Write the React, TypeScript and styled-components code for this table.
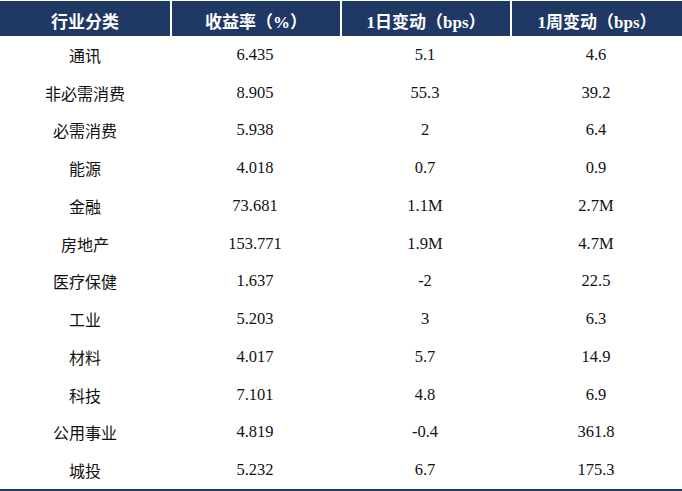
import React from 'react';
import styled, { createGlobalStyle } from 'styled-components';

const GlobalStyle = createGlobalStyle`
  html, body {
    margin: 0;
    padding: 0;
    background: #ffffff;
  }
`

const Table = styled.div`
  width: 682px;
  display: grid;
  grid-template-columns: 170px 170px 170px 172px;
  border-bottom: 2px solid #1f3864;
  padding-top: 1px;
`

const HeadCell = styled.div<{ first?: boolean }>`
  height: 35px;
  background: #1f3864;
  color: #ffffff;
  font-family: "Liberation Serif", "Noto Sans CJK SC", serif;
  font-weight: 700;
  font-size: 17px;
  display: flex;
  align-items: center;
  justify-content: center;
  padding-top: 4px;
  box-sizing: border-box;
  border-left: ${p => (p.first ? '0' : '2px solid #ffffff')};
`

const Cell = styled.div<{ cjk?: boolean }>`
  height: 37.75px;
  display: flex;
  align-items: center;
  justify-content: center;
  color: #111111;
  font-family: ${p => (p.cjk ? '"Noto Sans CJK SC", sans-serif' : '"Liberation Serif", serif')};
  font-size: ${p => (p.cjk ? '16px' : '16.5px')};
`

const headers = ['行业分类', '收益率（%）', '1日变动（bps）', '1周变动（bps）']

const rows: [string, string, string, string][] = [
  ['通讯', '6.435', '5.1', '4.6'],
  ['非必需消费', '8.905', '55.3', '39.2'],
  ['必需消费', '5.938', '2', '6.4'],
  ['能源', '4.018', '0.7', '0.9'],
  ['金融', '73.681', '1.1M', '2.7M'],
  ['房地产', '153.771', '1.9M', '4.7M'],
  ['医疗保健', '1.637', '-2', '22.5'],
  ['工业', '5.203', '3', '6.3'],
  ['材料', '4.017', '5.7', '14.9'],
  ['科技', '7.101', '4.8', '6.9'],
  ['公用事业', '4.819', '-0.4', '361.8'],
  ['城投', '5.232', '6.7', '175.3'],
]

export default function App() {
  return (
    <>
      <GlobalStyle />
      <Table>
        {headers.map((h, i) => (
          <HeadCell key={h} first={i === 0}>{h}</HeadCell>
        ))}
        {rows.map(r => (
          <React.Fragment key={r[0]}>
            <Cell cjk>{r[0]}</Cell>
            <Cell>{r[1]}</Cell>
            <Cell>{r[2]}</Cell>
            <Cell>{r[3]}</Cell>
          </React.Fragment>
        ))}
      </Table>
    </>
  )
}
